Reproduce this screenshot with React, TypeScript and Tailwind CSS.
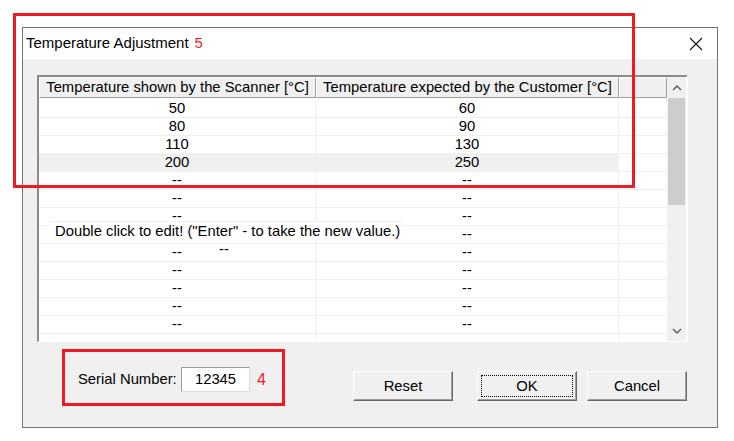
import React from 'react';

const rows: [string, string][] = [
  ['50', '60'],
  ['80', '90'],
  ['110', '130'],
  ['200', '250'],
  ['--', '--'],
  ['--', '--'],
  ['--', '--'],
  ['--', '--'],
  ['--', '--'],
  ['--', '--'],
  ['--', '--'],
  ['--', '--'],
  ['--', '--'],
  ['', ''],
];

const App: React.FC = () => {
  return (
    <div
      className="relative w-[734px] h-[441px] overflow-hidden bg-white text-[14.8px] text-black"
      style={{ fontFamily: '"Liberation Sans", Arial, sans-serif' }}
    >
      {/* Dialog window */}
      <div className="ml-[22px] mt-[27px] w-[696px] h-[401px] border border-[#747474] flex flex-col">
        {/* Title bar */}
        <div className="h-[31px] bg-white flex items-center pl-[3px] pr-[14px]">
          <span className="text-[15px]">Temperature Adjustment</span>
          <span className="ml-[6px] text-[15px] text-[#ed1c24]">5</span>
          <svg className="ml-auto" width="14" height="14" viewBox="0 0 14 14">
            <path d="M1 1 L13 13 M13 1 L1 13" stroke="#111" strokeWidth="1.1" fill="none" />
          </svg>
        </div>

        {/* Body */}
        <div className="flex-1 bg-[#f0f0f0] pt-[16px] pl-[14px]">
          {/* Grid */}
          <div className="w-[651px] h-[267px] flex border-t-2 border-l-2 border-t-[#8a8a8a] border-l-[#8a8a8a] border-b border-r-2 border-b-white border-r-white overflow-hidden">
            <div className="w-[628px] bg-white flex flex-col">
              {/* Header */}
              <div className="flex h-[21px] shrink-0 bg-[#f0f0f0]">
                <div className="w-[277px] flex items-center justify-center border-t border-l border-t-white border-l-white border-r border-b border-r-[#a0a0a0] border-b-[#a0a0a0] whitespace-nowrap">
                  Temperature shown by the Scanner [°C]
                </div>
                <div className="w-[303px] flex items-center justify-center border-t border-l border-t-white border-l-white border-r border-b border-r-[#a0a0a0] border-b-[#a0a0a0] whitespace-nowrap">
                  Temperature expected by the Customer [°C]
                </div>
                <div className="w-[48px] border-t border-l border-t-white border-l-white border-r border-b border-r-[#a0a0a0] border-b-[#a0a0a0]" />
              </div>
              <div className="h-[2px] shrink-0" />
              {rows.map(([a, b], i) => (
                <div key={i} className="flex h-[18px] shrink-0 border-b border-[#f0f0f0]">
                  <div className={`w-[277px] flex items-center justify-center border-r border-[#f0f0f0] ${i === 3 ? 'bg-[#f0f0f0]' : ''}`}>
                    {a}
                  </div>
                  <div className={`w-[303px] flex items-center justify-center border-r border-[#f0f0f0] ${i === 3 ? 'bg-[#f0f0f0]' : ''}`}>
                    {b}
                  </div>
                  <div className="w-[48px]" />
                </div>
              ))}
            </div>
            {/* Scrollbar */}
            <div className="w-[19px] bg-[#f0f0f0] flex flex-col">
              <div className="h-[21px] flex items-center justify-center">
                <svg width="10" height="6" viewBox="0 0 10 6">
                  <path d="M1 5 L5 1 L9 5" stroke="#606060" strokeWidth="1.5" fill="none" />
                </svg>
              </div>
              <div className="h-[107px] mx-[1px] bg-[#cdcdcd]" />
              <div className="flex-1" />
              <div className="h-[20px] flex items-center justify-center">
                <svg width="10" height="6" viewBox="0 0 10 6">
                  <path d="M1 1 L5 5 L9 1" stroke="#606060" strokeWidth="1.5" fill="none" />
                </svg>
              </div>
            </div>
          </div>

          {/* Bottom controls */}
          <div className="flex items-start mt-[21px]">
            <div className="ml-[41px] mt-[4px] flex items-center">
              <span className="w-[103px] whitespace-nowrap">Serial Number:</span>
              <div className="w-[69px] h-[25px] bg-white border border-[#9a9a9a] border-b-[#dcdcdc] border-r-[#dcdcdc] flex items-center justify-center">
                12345
              </div>
              <span className="ml-[7px] w-[20px] text-[#ed1c24] text-[16px]">4</span>
            </div>
            <button className="ml-[76px] mt-[8px] w-[100px] h-[30px] bg-[#f0f0f0] border border-t-white border-l-white border-r-[#696969] border-b-[#696969] shadow-[inset_-1px_-1px_0_#a0a0a0]">
              Reset
            </button>
            <button className="ml-[24px] mt-[8px] w-[100px] h-[30px] bg-[#f0f0f0] border border-[#696969] border-t-white border-l-white p-[3px] shadow-[inset_-1px_-1px_0_#a0a0a0]">
              <div className="w-full h-full border border-dotted border-black flex items-center justify-center">OK</div>
            </button>
            <button className="ml-[10px] mt-[8px] w-[100px] h-[30px] bg-[#f0f0f0] border border-t-white border-l-white border-r-[#696969] border-b-[#696969] shadow-[inset_-1px_-1px_0_#a0a0a0]">
              Cancel
            </button>
          </div>
        </div>
      </div>

      {/* Tooltip over the grid */}
      <div className="absolute left-[50px] top-[221px] w-[352px] h-[20px] bg-white border-t border-[#f0f0f0] pl-[5px] flex items-center whitespace-nowrap">
        Double click to edit! ("Enter" - to take the new value.)
      </div>
      <div className="absolute left-[219px] top-[240px] leading-[18px]">--</div>

      {/* Red annotation boxes */}
      <div className="absolute left-[13px] top-[13px] w-[622px] h-[175px] border-[3px] border-[#ed1c24]" />
      <div className="absolute left-[62px] top-[349px] w-[223px] h-[57px] border-[3px] border-[#ed1c24]" />
    </div>
  );
};

export default App;
